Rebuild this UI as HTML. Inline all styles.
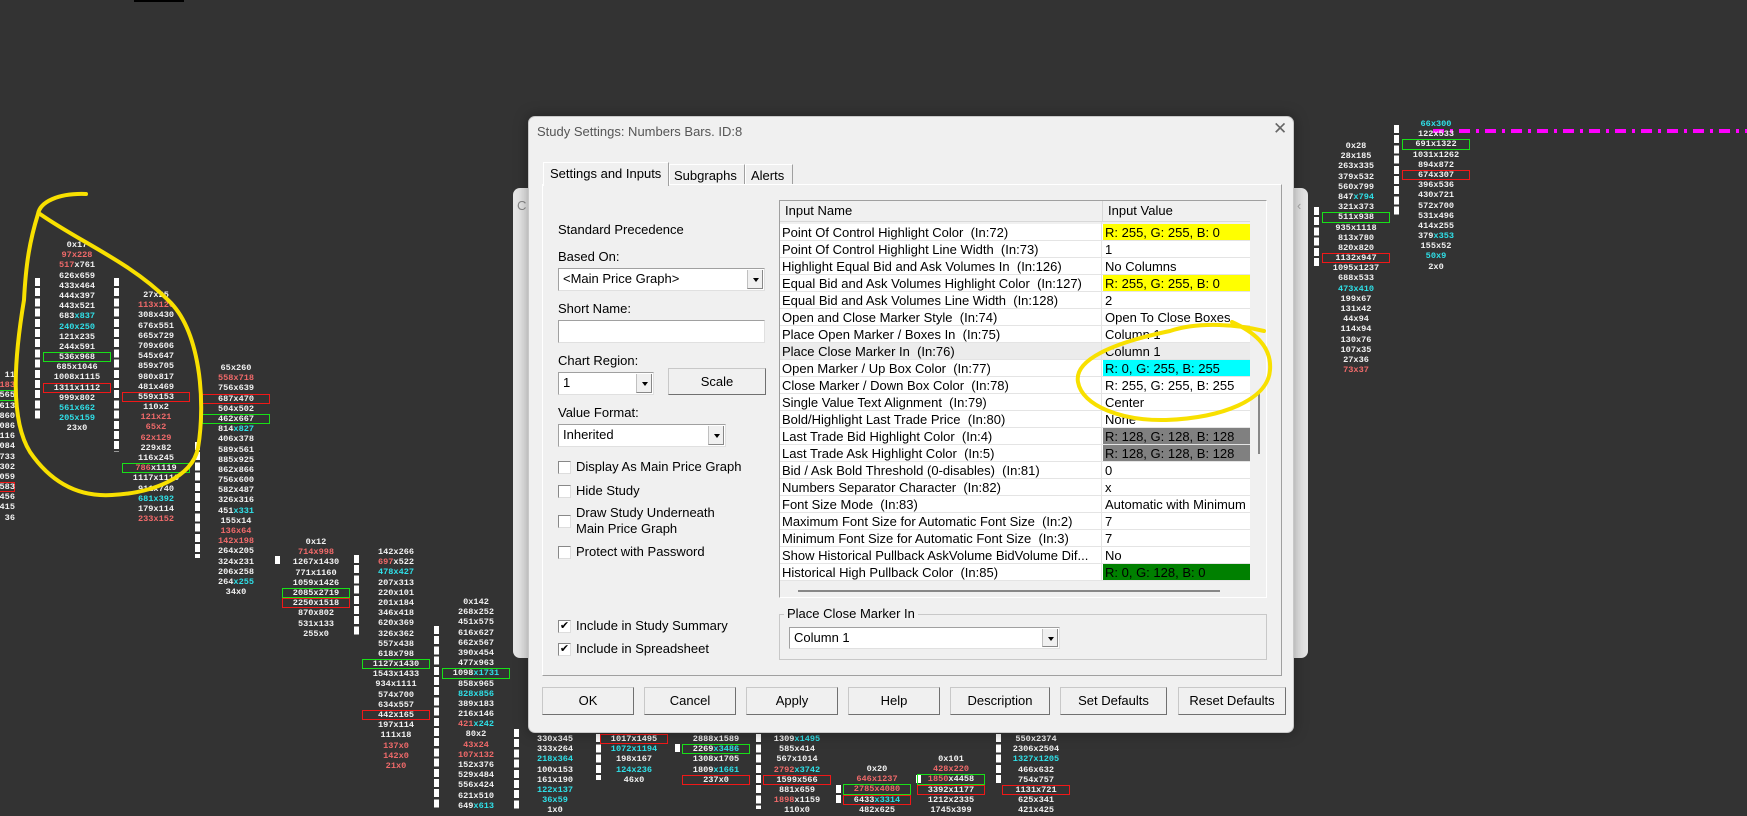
<!DOCTYPE html>
<html><head><meta charset="utf-8">
<style>
*{box-sizing:border-box}
body{margin:0;width:1747px;height:809px;background:#333333;position:relative;overflow:hidden;font-family:"Liberation Sans",sans-serif}
.n{position:absolute;width:80px;font:bold 8.6px/10.2px "Liberation Mono","DejaVu Sans Mono",monospace;color:#f2f2f2;text-align:center;white-space:nowrap}
.n p{margin:0 6px;height:10.2px}
.n i{color:#f06a6a;font-style:normal}
.n u{color:#2fe0e8;text-decoration:none}
.n .g{box-shadow:inset 0 0 0 1px #18e018}
.n .r{box-shadow:inset 0 0 0 1px #f01818}
.bar{position:absolute;width:5px;background:repeating-linear-gradient(#fff 0 8px,transparent 8px 10.2px)}
.dlg{position:absolute;background:#f0f0f0;border-radius:7px}
.t{position:absolute;font-size:13px;color:#000;white-space:nowrap}
.box{position:absolute;background:#fff;border:1px solid #a0a0a0;border-right-color:#e0e0e0;border-bottom-color:#e0e0e0;font-size:13px;padding:2px 0 0 4px;white-space:nowrap}
.arr{position:absolute;top:1px;right:1px;bottom:1px;width:16px;background:#f0f0f0;border-left:1px solid #c0c0c0;border-right:1px solid #888;border-bottom:1px solid #888}
.arr:after{content:"";position:absolute;left:5px;top:8px;border:3px solid transparent;border-top:4px solid #000}
.btn{position:absolute;background:#f0f0f0;border:1px solid #c8c8c8;border-right-color:#707070;border-bottom-color:#707070;font-size:13px;text-align:center;line-height:26px}
.cb{position:absolute;width:13px;height:13px;background:#fff;border:1px solid #888;border-right-color:#ddd;border-bottom-color:#ddd}
.grid{position:absolute;left:779px;top:200px;width:488px;height:398px;background:#f0f0f0;border:1px solid #a0a0a0;border-right-color:#fff;border-bottom-color:#fff}
.row{position:absolute;left:0;width:470px;height:17px;font-size:13px;line-height:17px;border-bottom:1px solid #e4e4e4;background:#fff}
.row span{position:absolute;left:2px}
.row b{position:absolute;left:323px;width:147px;height:16px;font-weight:normal;padding-left:2px}
</style></head><body>
<div style="position:absolute;left:134px;top:0;width:50px;height:2px;background:#000"></div>

<!-- left numbers -->
<div class="n" style="left:-33px;top:370px;text-align:right;width:48px">
<p style="margin:0">11</p><p style="margin:0"><i>183</i></p><p class="g" style="margin:0">565</p><p style="margin:0">613</p><p style="margin:0">860</p><p style="margin:0">1086</p><p style="margin:0">1116</p><p style="margin:0">1084</p><p style="margin:0">733</p><p style="margin:0">1302</p><p style="margin:0">1059</p><p class="r" style="margin:0">583</p><p style="margin:0">456</p><p style="margin:0">415</p><p style="margin:0">36</p></div>
<div class="bar" style="left:35px;top:278px;height:143px"></div>
<div class="n" style="left:37px;top:240px">
<p>0x17</p><p><i>97x228</i></p><p><i>517</i>x761</p><p>626x659</p><p>433x464</p><p>444x397</p><p>443x521</p><p>683<u>x837</u></p><p><u>240x250</u></p><p>121x235</p><p>244x591</p><p class="g">536x968</p><p>685x1046</p><p>1008x1115</p><p class="r">1311x1112</p><p>999x802</p><p><u>561x662</u></p><p><u>205x159</u></p><p>23x0</p></div>
<div class="bar" style="left:114px;top:278px;height:174px"></div>
<div class="n" style="left:116px;top:290px">
<p>27x25</p><p><i>113x120</i></p><p>308x430</p><p>676x551</p><p>665x729</p><p>709x606</p><p>545x647</p><p>859x705</p><p>980x817</p><p>481x469</p><p class="r">559x153</p><p>110x2</p><p><i>121x21</i></p><p><i>65x2</i></p><p><i>62x129</i></p><p>229x82</p><p>116x245</p><p class="g"><i>786</i>x1119</p><p>1117x1110</p><p>911x740</p><p><u>681x392</u></p><p>179x114</p><p><i>233x152</i></p></div>
<div class="bar" style="left:195px;top:442px;height:116px"></div>
<div class="n" style="left:196px;top:363px">
<p>65x260</p><p><i>558x718</i></p><p>756x639</p><p class="r">687x470</p><p>504x502</p><p class="g">462x667</p><p>814<u>x827</u></p><p>406x378</p><p>589x561</p><p>885x925</p><p>862x866</p><p>756x600</p><p>582x487</p><p>326x316</p><p>451<u>x331</u></p><p>155x14</p><p><i>136x64</i></p><p><i>142x198</i></p><p>264x205</p><p>324x231</p><p>206x258</p><p>264<u>x255</u></p><p>34x0</p></div>
<div class="bar" style="left:275px;top:556px;height:8px"></div>
<div class="n" style="left:276px;top:537px">
<p>0x12</p><p><i>714x998</i></p><p>1267x1430</p><p>771x1160</p><p>1059x1426</p><p class="g">2085x2719</p><p class="r">2250x1518</p><p>870x802</p><p>531x133</p><p>255x0</p></div>
<div class="bar" style="left:354px;top:555px;height:81px"></div>
<div class="n" style="left:356px;top:547px">
<p>142x266</p><p><i>697</i>x522</p><p><u>478x427</u></p><p>207x313</p><p>220x101</p><p>201x184</p><p>346x418</p><p>620x369</p><p>326x362</p><p>557x438</p><p>618x798</p><p class="g">1127x1430</p><p>1543x1433</p><p>934x1111</p><p>574x700</p><p>634x557</p><p class="r">442x165</p><p>197x114</p><p>111x18</p><p><i>137x0</i></p><p><i>142x0</i></p><p><i>21x0</i></p></div>
<div class="bar" style="left:434px;top:626px;height:183px"></div>
<div class="n" style="left:436px;top:597px">
<p>0x142</p><p>268x252</p><p>451x575</p><p>616x627</p><p>662x567</p><p>390x454</p><p>477x963</p><p class="g">1098<u>x1731</u></p><p>858x965</p><p><u>828x856</u></p><p>389x183</p><p>216x146</p><p><i>421</i><u>x242</u></p><p>80x2</p><p><i>43x24</i></p><p><i>107x132</i></p><p>152x376</p><p>529x484</p><p>556x424</p><p>621x510</p><p>649<u>x613</u></p></div>
<div class="bar" style="left:514px;top:729px;height:80px"></div>
<div class="n" style="left:515px;top:734px">
<p>330x345</p><p>333x264</p><p><u>218x364</u></p><p>100x153</p><p>161x190</p><p><u>122x137</u></p><p><u>36x59</u></p><p>1x0</p></div>
<div class="bar" style="left:596px;top:724px;height:56px"></div>
<div class="n" style="left:594px;top:734px">
<p class="r">1017x1495</p><p><u>1072x1194</u></p><p>198x167</p><p><u>124x236</u></p><p>46x0</p></div>
<div class="bar" style="left:675px;top:744px;height:10px"></div>
<div class="n" style="left:676px;top:734px">
<p>2888x1589</p><p class="g">2269<u>x3486</u></p><p>1308x1705</p><p>1809<u>x1661</u></p><p class="r">237x0</p></div>
<div class="bar" style="left:756px;top:724px;height:85px"></div>
<div class="n" style="left:757px;top:734px">
<p>1309<u>x1495</u></p><p>585x414</p><p>567x1014</p><p><i>2792</i><u>x3742</u></p><p class="r">1599x566</p><p>881x659</p><p><i>1898</i>x1159</p><p>110x0</p></div>
<div class="bar" style="left:836px;top:785px;height:20px"></div>
<div class="n" style="left:837px;top:764px">
<p>0x20</p><p><i>646x1237</i></p><p class="g"><i>2785x4080</i></p><p class="r">6433<u>x3314</u></p><p>482x625</p></div>
<div class="bar" style="left:916px;top:775px;height:10px"></div>
<div class="n" style="left:911px;top:754px">
<p>0x101</p><p><i>428x220</i></p><p class="g"><i>1850</i>x4458</p><p class="r">3392x1177</p><p>1212x2335</p><p>1745x399</p></div>
<div class="bar" style="left:996px;top:724px;height:61px"></div>
<div class="n" style="left:996px;top:734px">
<p>550x2374</p><p>2306x2504</p><p><u>1327x1205</u></p><p>466x632</p><p>754x757</p><p class="r">1131x721</p><p>625x341</p><p>421x425</p></div>

<!-- right numbers -->
<div class="bar" style="left:1314px;top:207px;height:61px"></div>
<div class="n" style="left:1316px;top:141px">
<p>0x28</p><p>28x185</p><p>263x335</p><p>379x532</p><p>560x799</p><p>847<u>x794</u></p><p>321x373</p><p class="g">511x938</p><p>935x1118</p><p>813x780</p><p>820x820</p><p class="r">1132x947</p><p>1095x1237</p><p>688x533</p><p><u>473x410</u></p><p>199x67</p><p>131x42</p><p>44x94</p><p>114x94</p><p>130x76</p><p>107x35</p><p>27x36</p><p><i>73x37</i></p></div>
<div class="bar" style="left:1394px;top:125px;height:91px"></div>
<div style="position:absolute;left:1433px;top:129px;width:314px;height:4px;background:repeating-linear-gradient(90deg,#ff00ff 0 11px,transparent 11px 17px,#ff00ff 17px 20px,transparent 20px 26px)"></div>
<div class="n" style="left:1396px;top:119px">
<p><u>66x300</u></p><p>122x533</p><p class="g">691x1322</p><p>1031x1262</p><p>894x872</p><p class="r">674x307</p><p>396x536</p><p>430x721</p><p>572x700</p><p>531x496</p><p>414x255</p><p>379<u>x353</u></p><p>155x52</p><p><u>50x9</u></p><p>2x0</p></div>

<!-- back dialog -->
<div class="dlg" style="left:513px;top:188px;width:795px;height:470px;background:#e6e6e6"></div>
<div class="t" style="left:517px;top:198px;color:#888">C</div>
<div class="t" style="left:1297px;top:198px;color:#aaa">&lsaquo;</div>

<!-- main dialog -->
<div class="dlg" style="left:528px;top:116px;width:766px;height:617px;border:1px solid #c8c8c8;box-shadow:0 0 14px rgba(0,0,0,.35)"></div>
<div class="t" style="left:537px;top:124px;font-size:13px;color:#555">Study Settings: Numbers Bars. ID:8</div>
<div class="t" style="left:1273px;top:119px;font-size:17px;color:#666">&#x2715;</div>

<!-- tab panel -->
<div style="position:absolute;left:542px;top:184px;width:740px;height:492px;border:1px solid #fff;border-right-color:#a0a0a0;border-bottom-color:#a0a0a0"></div>
<div style="position:absolute;left:543px;top:162px;width:126px;height:24px;background:#f0f0f0;border:1px solid #fff;border-right-color:#a0a0a0;border-bottom:none"></div>
<div class="t" style="left:550px;top:166px">Settings and Inputs</div>
<div style="position:absolute;left:669px;top:164px;width:76px;height:20px;border:1px solid #fff;border-right-color:#a0a0a0;border-bottom:none"></div>
<div class="t" style="left:674px;top:168px">Subgraphs</div>
<div style="position:absolute;left:745px;top:164px;width:48px;height:20px;border:1px solid #fff;border-right-color:#a0a0a0;border-bottom:none"></div>
<div class="t" style="left:751px;top:168px">Alerts</div>

<!-- left form -->
<div class="t" style="left:558px;top:222px">Standard Precedence</div>
<div class="t" style="left:558px;top:249px">Based On:</div>
<div class="box" style="left:558px;top:268px;width:207px;height:23px">&lt;Main Price Graph&gt;<div class="arr"></div></div>
<div class="t" style="left:558px;top:301px">Short Name:</div>
<div class="box" style="left:558px;top:320px;width:207px;height:23px"></div>
<div class="t" style="left:558px;top:353px">Chart Region:</div>
<div class="box" style="left:558px;top:372px;width:96px;height:23px">1<div class="arr"></div></div>
<div class="btn" style="left:668px;top:368px;width:98px;height:27px">Scale</div>
<div class="t" style="left:558px;top:405px">Value Format:</div>
<div class="box" style="left:558px;top:424px;width:168px;height:23px">Inherited<div class="arr"></div></div>
<div class="cb" style="left:558px;top:461px"></div><div class="t" style="left:576px;top:459px">Display As Main Price Graph</div>
<div class="cb" style="left:558px;top:485px"></div><div class="t" style="left:576px;top:483px">Hide Study</div>
<div class="cb" style="left:558px;top:515px"></div><div class="t" style="left:576px;top:505px;line-height:16px">Draw Study Underneath<br>Main Price Graph</div>
<div class="cb" style="left:558px;top:546px"></div><div class="t" style="left:576px;top:544px">Protect with Password</div>
<div class="cb" style="left:558px;top:620px;font-size:11px;line-height:10px;text-align:center">&#x2714;</div><div class="t" style="left:576px;top:618px">Include in Study Summary</div>
<div class="cb" style="left:558px;top:643px;font-size:11px;line-height:10px;text-align:center">&#x2714;</div><div class="t" style="left:576px;top:641px">Include in Spreadsheet</div>

<!-- grid -->
<div class="grid">
<div style="position:absolute;left:0;top:0;width:470px;height:21px;background:#f0f0f0;border-bottom:1px solid #d8d8d8;font-size:13px;line-height:20px"><span style="position:absolute;left:5px">Input Name</span><span style="position:absolute;left:322px;top:0;height:21px;border-left:1px solid #d8d8d8;padding-left:5px">Input Value</span></div>
<div class="row" style="top:23px"><span>Point Of Control Highlight Color&nbsp;&nbsp;(In:72)</span><b style="background:#ff0">R: 255, G: 255, B: 0</b></div>
<div class="row" style="top:40px"><span>Point Of Control Highlight Line Width&nbsp;&nbsp;(In:73)</span><b>1</b></div>
<div class="row" style="top:57px"><span>Highlight Equal Bid and Ask Volumes In&nbsp;&nbsp;(In:126)</span><b>No Columns</b></div>
<div class="row" style="top:74px"><span>Equal Bid and Ask Volumes Highlight Color&nbsp;&nbsp;(In:127)</span><b style="background:#ff0">R: 255, G: 255, B: 0</b></div>
<div class="row" style="top:91px"><span>Equal Bid and Ask Volumes Line Width&nbsp;&nbsp;(In:128)</span><b>2</b></div>
<div class="row" style="top:108px"><span>Open and Close Marker Style&nbsp;&nbsp;(In:74)</span><b>Open To Close Boxes</b></div>
<div class="row" style="top:125px"><span>Place Open Marker / Boxes In&nbsp;&nbsp;(In:75)</span><b>Column 1</b></div>
<div class="row" style="top:142px;background:#ececec"><span>Place Close Marker In&nbsp;&nbsp;(In:76)</span><b>Column 1</b></div>
<div class="row" style="top:159px"><span>Open Marker / Up Box Color&nbsp;&nbsp;(In:77)</span><b style="background:#0ff">R: 0, G: 255, B: 255</b></div>
<div class="row" style="top:176px"><span>Close Marker / Down Box Color&nbsp;&nbsp;(In:78)</span><b>R: 255, G: 255, B: 255</b></div>
<div class="row" style="top:193px"><span>Single Value Text Alignment&nbsp;&nbsp;(In:79)</span><b>Center</b></div>
<div class="row" style="top:210px"><span>Bold/Highlight Last Trade Price&nbsp;&nbsp;(In:80)</span><b>None</b></div>
<div class="row" style="top:227px"><span>Last Trade Bid Highlight Color&nbsp;&nbsp;(In:4)</span><b style="background:#808080">R: 128, G: 128, B: 128</b></div>
<div class="row" style="top:244px"><span>Last Trade Ask Highlight Color&nbsp;&nbsp;(In:5)</span><b style="background:#808080">R: 128, G: 128, B: 128</b></div>
<div class="row" style="top:261px"><span>Bid / Ask Bold Threshold (0-disables)&nbsp;&nbsp;(In:81)</span><b>0</b></div>
<div class="row" style="top:278px"><span>Numbers Separator Character&nbsp;&nbsp;(In:82)</span><b>x</b></div>
<div class="row" style="top:295px"><span>Font Size Mode&nbsp;&nbsp;(In:83)</span><b style="overflow:hidden">Automatic with Minimum</b></div>
<div class="row" style="top:312px"><span>Maximum Font Size for Automatic Font Size&nbsp;&nbsp;(In:2)</span><b>7</b></div>
<div class="row" style="top:329px"><span>Minimum Font Size for Automatic Font Size&nbsp;&nbsp;(In:3)</span><b>7</b></div>
<div class="row" style="top:346px"><span>Show Historical Pullback AskVolume BidVolume Dif...</span><b>No</b></div>
<div class="row" style="top:363px"><span>Historical High Pullback Color&nbsp;&nbsp;(In:85)</span><b style="background:#008000">R: 0, G: 128, B: 0</b></div>
<div style="position:absolute;left:321px;top:21px;width:1px;height:359px;background:#e4e4e4"></div>
<div style="position:absolute;left:478px;top:190px;width:2px;height:63px;background:#888"></div>
<div style="position:absolute;left:18px;top:389px;width:422px;height:2px;background:#888"></div>
</div>

<!-- group box -->
<div style="position:absolute;left:779px;top:614px;width:488px;height:46px;border:1px solid #c8c8c8"></div>
<div class="t" style="left:784px;top:606px;background:#f0f0f0;padding:0 3px">Place Close Marker In</div>
<div class="box" style="left:789px;top:627px;width:271px;height:22px">Column 1<div class="arr"></div></div>

<!-- buttons -->
<div class="btn" style="left:542px;top:687px;width:92px;height:28px">OK</div>
<div class="btn" style="left:644px;top:687px;width:92px;height:28px">Cancel</div>
<div class="btn" style="left:746px;top:687px;width:92px;height:28px">Apply</div>
<div class="btn" style="left:848px;top:687px;width:92px;height:28px">Help</div>
<div class="btn" style="left:950px;top:687px;width:100px;height:28px">Description</div>
<div class="btn" style="left:1060px;top:687px;width:107px;height:28px">Set Defaults</div>
<div class="btn" style="left:1178px;top:687px;width:108px;height:28px">Reset Defaults</div>

<!-- yellow annotations -->
<svg style="position:absolute;left:0;top:0" width="1747" height="809">
<g fill="none" stroke="#f8e000" stroke-width="4" stroke-linecap="round">
<path d="M86,194 C58,193 40,202 38,214 C30,240 26,262 24,300 C14,360 10,420 30,452 C52,484 80,497 112,495 C152,493 192,478 198,448 C206,400 200,330 168,300 C130,262 80,242 40,214"/>
<path d="M1264,331 C1240,325 1200,321 1170,331 C1112,343 1074,360 1078,382 C1082,406 1122,421 1166,420 C1222,418 1268,400 1270,370 C1272,345 1252,331 1232,322"/>
</g></svg>
</body></html>
